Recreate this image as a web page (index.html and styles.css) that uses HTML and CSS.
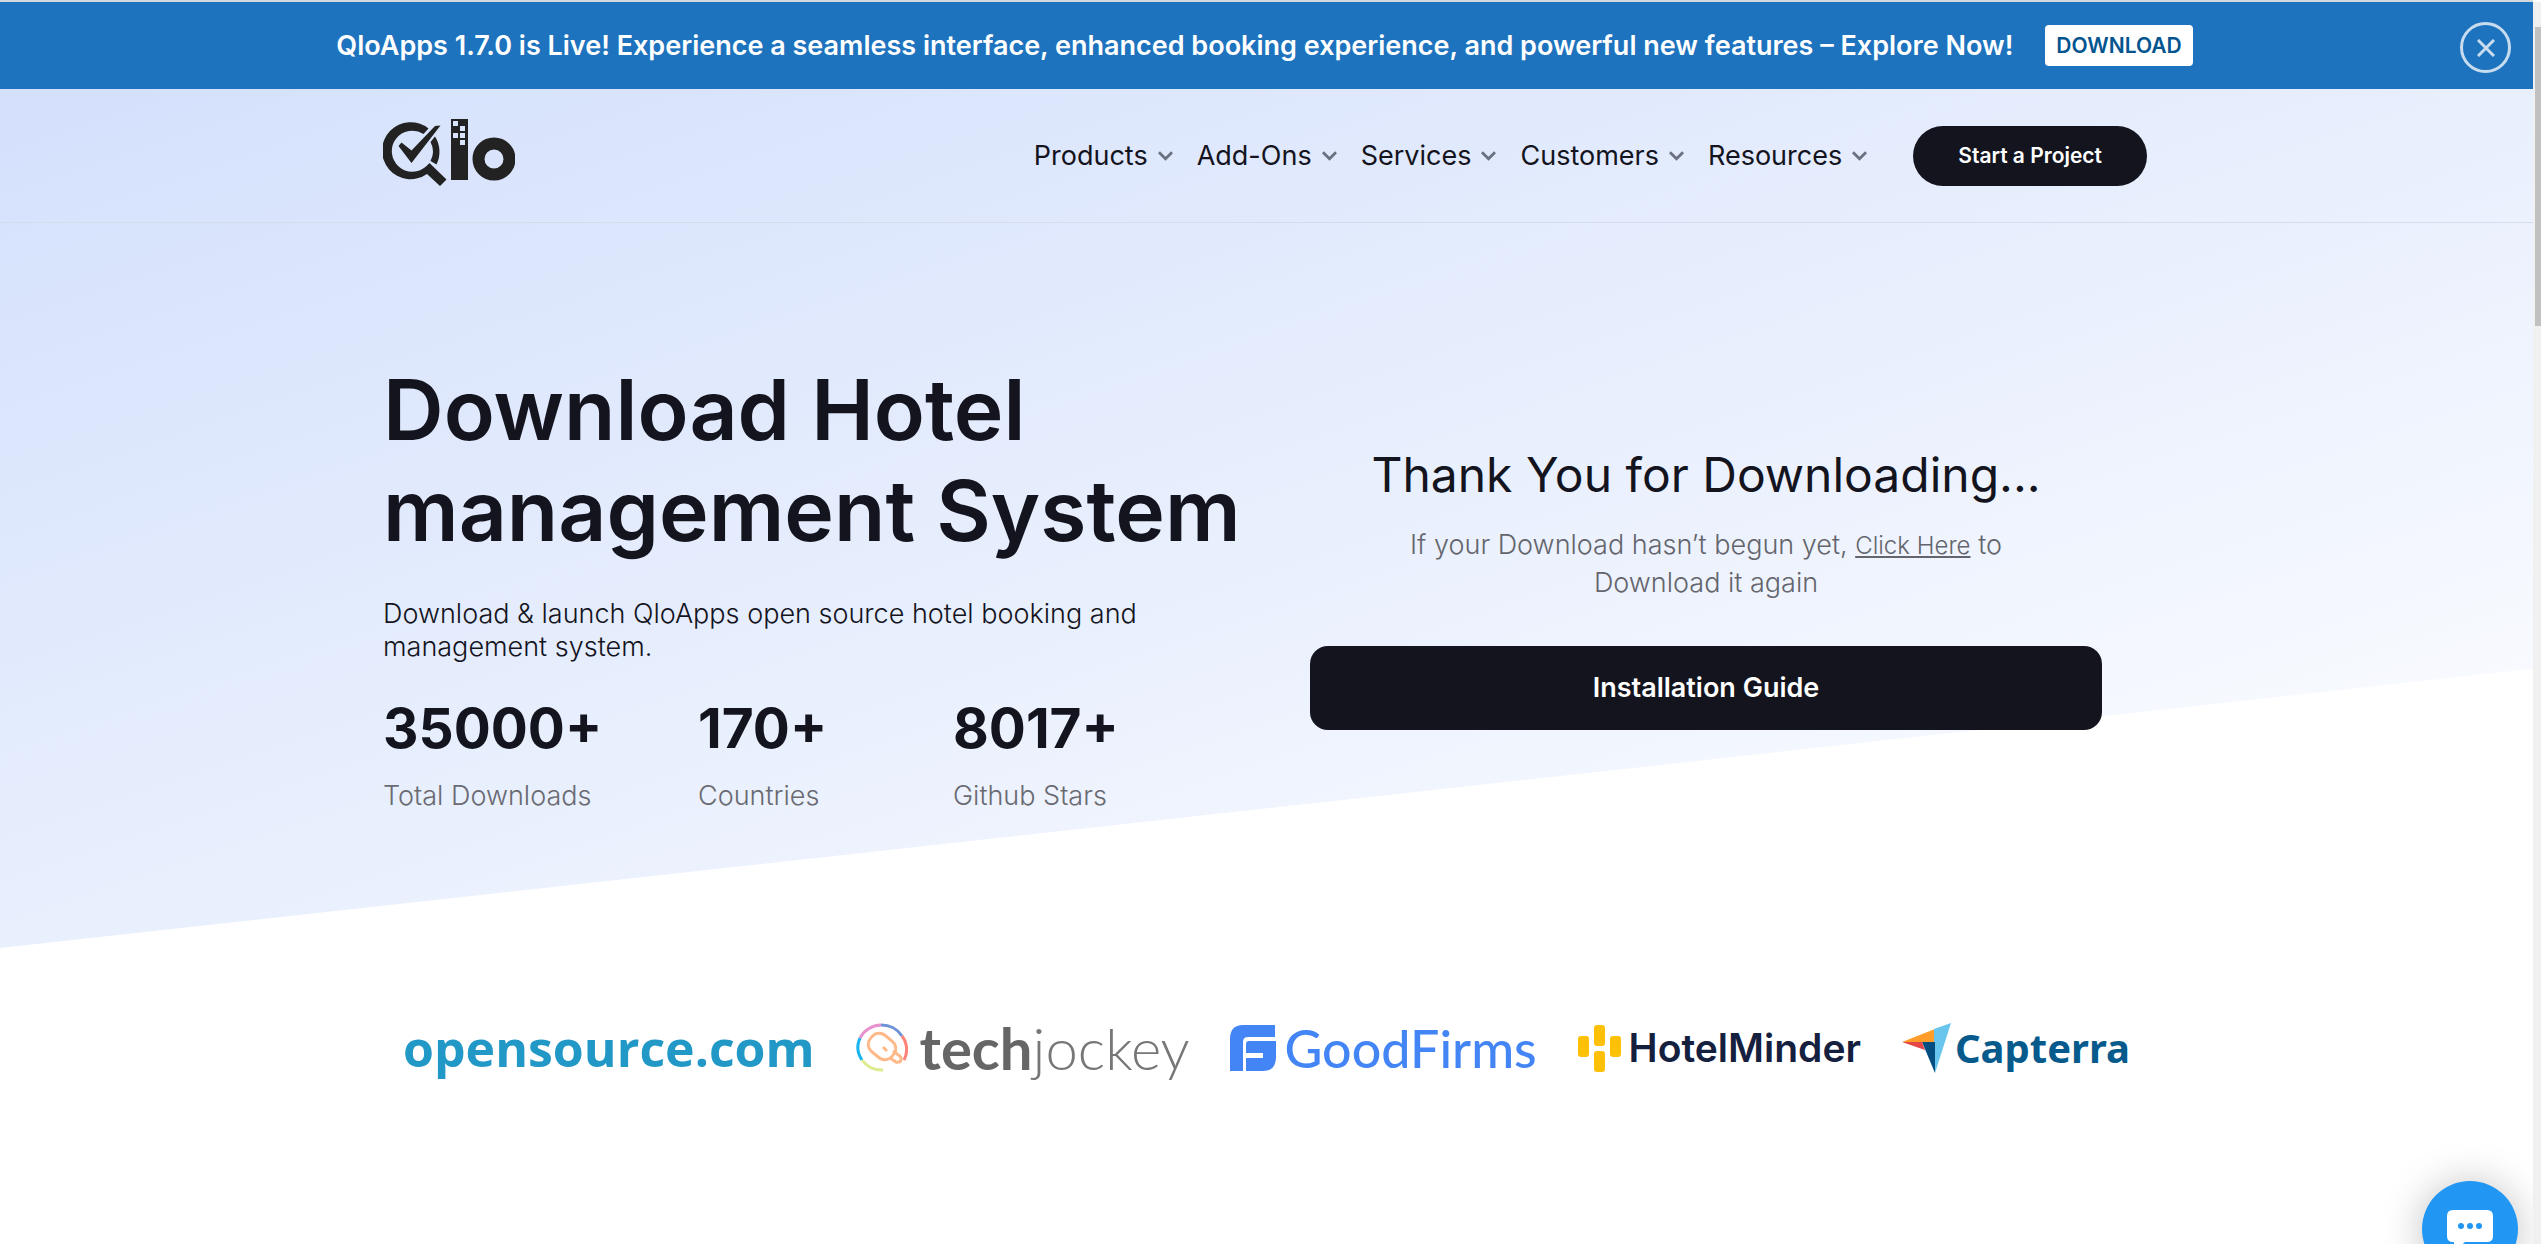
FILE: index.html
```html
<!DOCTYPE html>
<html lang="en">
<head>
    <meta charset="UTF-8">
    <title>Download Hotel management System - QloApps</title>
    <link rel="stylesheet" href="styles.css">
</head>
<body>
    <div class="banner">
        <p class="banner-text">QloApps 1.7.0 is Live! Experience a seamless interface, enhanced booking experience, and powerful new features – Explore Now!</p>
        <a class="banner-btn" href="#">DOWNLOAD</a>
        <button class="banner-close" aria-label="Close">
            <svg width="18" height="18" viewBox="0 0 18 18"><path d="M1 1 17 17M17 1 1 17" fill="none" stroke="currentColor" stroke-width="3"/></svg>
        </button>
    </div>

    <div class="top">
        <header class="header">
            <div class="container header-row">
                <a class="logo" href="#" aria-label="QloApps">
                    <svg width="132" height="67" viewBox="0 0 132 67">
                        <g fill="#222">
                            <path d="M45.500 9.500A28.500 28.500 0 1 0 44 55L57 67 63.500 60.500 46.500 44 43.500 47A20.500 20.500 0 1 1 40.500 15Z"/>
                            <path d="M52 17.500A28.500 28.500 0 0 1 53.500 45.500L47.500 42A20.500 20.500 0 0 0 47.500 23Z"/>
                            <path d="M15.500 27 18.500 23.500 28.500 31.500 52 7 57.500 6.500 28.500 44Z"/>
                            <path fill-rule="evenodd" d="M68 0H85V61H68ZM70 2V7H75V2ZM77 7V12H82V7ZM70 14V19H75V14ZM77 14V19H82V14ZM77 21V26H82V21Z"/>
                        </g>
                        <circle cx="111" cy="40" r="15.500" fill="none" stroke="#222" stroke-width="12"/>
                    </svg>
                </a>
                <nav class="nav">
                    <a href="#">Products <svg class="arrow" viewBox="0 0 16 10"><path d="M1 1 8 8 15 1"/></svg></a>
                    <a href="#">Add-Ons <svg class="arrow" viewBox="0 0 16 10"><path d="M1 1 8 8 15 1"/></svg></a>
                    <a href="#">Services <svg class="arrow" viewBox="0 0 16 10"><path d="M1 1 8 8 15 1"/></svg></a>
                    <a href="#">Customers <svg class="arrow" viewBox="0 0 16 10"><path d="M1 1 8 8 15 1"/></svg></a>
                    <a href="#">Resources <svg class="arrow" viewBox="0 0 16 10"><path d="M1 1 8 8 15 1"/></svg></a>
                    <a class="btn-project" href="#">Start a Project</a>
                </nav>
            </div>
        </header>

        <main class="container hero">
            <section class="hero-left">
                <h1>Download Hotel management System</h1>
                <p class="lead">Download &amp; launch QloApps open source hotel booking and management system.</p>
                <div class="stats">
                    <div>
                        <strong>35000+</strong>
                        <span>Total Downloads</span>
                    </div>
                    <div>
                        <strong>170+</strong>
                        <span>Countries</span>
                    </div>
                    <div>
                        <strong>8017+</strong>
                        <span>Github Stars</span>
                    </div>
                </div>
            </section>
            <section class="hero-right">
                <h2>Thank You for Downloading...</h2>
                <p>If your Download hasn’t begun yet, <a href="#">Click Here</a> to Download it again</p>
                <a class="btn-guide" href="#">Installation Guide</a>
            </section>
        </main>
    </div>

    <section class="container brands">
        <div class="brand opensource">opensource.com</div>
        <div class="brand techjockey">
            <svg width="52" height="50" viewBox="0 0 52 50" fill="none" stroke-width="3">
                <path stroke="#e892cf" d="M4 15A24 23 0 0 1 25 2"/>
                <path stroke="#6f93d6" d="M25 2A24 23 0 0 1 46 13"/>
                <path stroke="#ff8276" d="M46 13A24 23 0 0 1 48 37"/>
                <path stroke="#19b5ee" d="M4 15A24 23 0 0 0 6 37"/>
                <path stroke="#dcec8c" d="M6 37A24 23 0 0 0 27 47"/>
                <g stroke="#ffb888">
                    <rect x="12" y="13" width="28" height="21" rx="9" transform="rotate(40 26 23.500)"/>
                    <path d="M34 35 40 39Q44 40 45 37T41 31L37 28M27 24 31 28"/>
                </g>
            </svg>
            <span><b>tech</b>jockey</span>
        </div>
        <div class="brand goodfirms">
            <svg width="46" height="46" viewBox="0 0 46 46">
                <path fill="#4485f5" d="M13 0H45V12H18Q13 12 13 17V46H0V14Q0 0 13 0Z"/>
                <path fill="#4485f5" d="M19 16H46V32Q46 46 33 46H16V33H33V28H16V19Q16 16 19 16Z"/>
            </svg>
            <span>GoodFirms</span>
        </div>
        <div class="brand hotelminder">
            <svg width="43" height="47" viewBox="0 0 43 47" fill="#ffc107">
                <rect x="0" y="11" width="11" height="21" rx="3"/>
                <rect x="16" y="0" width="11" height="21" rx="3"/>
                <rect x="16" y="26" width="11" height="21" rx="3"/>
                <rect x="32" y="11" width="11" height="21" rx="3"/>
            </svg>
            <span>HotelMinder</span>
        </div>
        <div class="brand capterra">
            <svg width="49" height="50" viewBox="0 0 49 50">
                <path fill="#ff9d28" d="M0 19 33 6V19Z"/>
                <path fill="#68c5ed" d="M49 0 32 6V19L33 50Z"/>
                <path fill="#044d80" d="M20 19H33V50Z"/>
                <path fill="#e54747" d="M0 19H20L23 27Z"/>
            </svg>
            <span>Capterra</span>
        </div>
    </section>

    <button class="chat" aria-label="Open chat">
        <svg width="46" height="42" viewBox="0 0 46 42">
            <path fill="#fff" d="M6 0H40Q46 0 46 6V26Q46 32 40 32H18L7 42V32H6Q0 32 0 26V6Q0 0 6 0Z"/>
            <g fill="#2196f3"><circle cx="14" cy="16" r="3"/><circle cx="23" cy="16" r="3"/><circle cx="32" cy="16" r="3"/></g>
        </svg>
    </button>
    <div class="scrollbar"><div class="thumb"></div></div>
</body>
</html>
```
FILE: styles.css
```css
* {
    box-sizing: border-box;
}

body {
    margin: 0;
    padding-right: 8px;
    min-height: 100vh;
    font-family: Inter, "Liberation Sans", sans-serif;
    font-size: 27px;
    color: #14141e;
    background: #fff;
}

a {
    color: inherit;
    text-decoration: none;
}

h1, h2, p {
    margin: 0;
}

svg {
    display: block;
    flex: none;
}

.container {
    max-width: 1767px;
    margin: 0 auto;
}

/* banner */
.banner {
    position: relative;
    display: flex;
    justify-content: center;
    align-items: center;
    gap: 32px;
    height: 89px;
    padding-right: 4px;
    border-top: 2px solid #d5d9df;
    background: #1e73be;
    color: #fff;
}

.banner-text {
    font-weight: 600;
}

.banner-btn {
    padding: 0 11px;
    border-radius: 4px;
    background: #fff;
    color: #04558f;
    font-size: 21px;
    font-weight: 600;
    line-height: 41px;
}

.banner-close {
    position: absolute;
    right: 22px;
    top: 20px;
    display: flex;
    justify-content: center;
    align-items: center;
    width: 51px;
    height: 51px;
    padding: 0;
    border: 3px solid #c7dcef;
    border-radius: 50%;
    background: none;
    color: #c7dcef;
}

/* slanted background behind header and hero */
.top {
    position: relative;
    isolation: isolate;
}

.top::before {
    content: "";
    position: absolute;
    z-index: -1;
    inset: 0;
    background: linear-gradient(to bottom right, #d4e0fc, #e8effd 50%, #ffffff);
    clip-path: polygon(0 0, 100% 0, 100% 67.5%, 0 100%);
}

.header {
    border-bottom: 1px solid #d5dcec;
}

.header-row {
    display: flex;
    justify-content: space-between;
    align-items: center;
    height: 133px;
}

.logo {
    padding-bottom: 6px;
}

.nav {
    display: flex;
    align-items: center;
    gap: 24px;
}

.nav a {
    display: flex;
    align-items: center;
    gap: 10px;
}

.arrow {
    width: 15px;
    height: 10px;
    fill: none;
    stroke: #6b7080;
    stroke-width: 3;
}

.nav .btn-project {
    margin-left: 22px;
    margin-right: 3px;
    padding: 0 45px;
    border-radius: 30px;
    background: #14141e;
    color: #fff;
    font-size: 21px;
    font-weight: 600;
    line-height: 60px;
}

/* hero */
.hero {
    display: flex;
    padding: 136px 0 136px;
}

.hero-left {
    flex: 1;
}

h1 {
    font-size: 84px;
    font-weight: 600;
    line-height: 101px;
}

.lead {
    max-width: 800px;
    margin-top: 36px;
    font-weight: 300;
    line-height: 33px;
}

.stats {
    display: grid;
    grid-template-columns: 315px 255px auto;
    margin-top: 32px;
}

.stats strong {
    display: block;
    font-size: 55px;
    font-weight: 700;
    line-height: 66px;
}

.stats span {
    display: block;
    margin-top: 18px;
    color: #696a72;
    font-weight: 300;
    line-height: 33px;
}

.hero-right {
    width: 792px;
    margin-right: 48px;
    padding-top: 84px;
    text-align: center;
}

h2 {
    font-size: 48px;
    font-weight: 400;
    line-height: 64px;
}

.hero-right p {
    max-width: 660px;
    margin: 19px auto 45px;
    color: #64656c;
    font-weight: 300;
    line-height: 37px;
}

.hero-right p a {
    font-size: 24px;
    text-decoration: underline;
}

.btn-guide {
    display: block;
    border-radius: 18px;
    background: #14141e;
    color: #fff;
    font-weight: 600;
    line-height: 84px;
}

/* brand logos */
.brands {
    display: flex;
    justify-content: space-between;
    align-items: center;
    padding: 60px 20px;
}

.brand {
    display: flex;
    align-items: center;
    gap: 12px;
    line-height: 80px;
}

.opensource {
    color: #2198c6;
    font-family: "Open Sans", sans-serif;
    font-size: 50px;
    font-weight: 700;
}

.techjockey {
    color: #777;
    font-family: Lato, sans-serif;
    font-size: 58px;
    font-weight: 300;
}

.techjockey b {
    color: #666;
    font-weight: 700;
}

.goodfirms {
    gap: 8px;
    color: #4485f5;
    font-family: Lato, sans-serif;
    font-size: 52px;
    font-weight: 500;
}

.hotelminder {
    gap: 8px;
    color: #15203f;
    font-size: 39px;
    font-weight: 600;
}

.capterra {
    gap: 4px;
    color: #075a8c;
    font-family: "Noto Sans", sans-serif;
    font-size: 40px;
    font-weight: 700;
}

/* chat bubble */
.chat {
    position: fixed;
    right: 23px;
    bottom: -33px;
    display: flex;
    justify-content: center;
    width: 96px;
    height: 96px;
    padding: 29px 0 0;
    border: 0;
    border-radius: 50%;
    background: #2196f3;
    box-shadow: 0 2px 40px rgba(0, 0, 0, 0.25);
}

.scrollbar {
    position: fixed;
    top: 2px;
    right: 0;
    bottom: 0;
    width: 8px;
    padding: 25px 0 0 2px;
    background: #f0f0f0;
}

.thumb {
    height: 299px;
    background: #c1c1c1;
}
```
